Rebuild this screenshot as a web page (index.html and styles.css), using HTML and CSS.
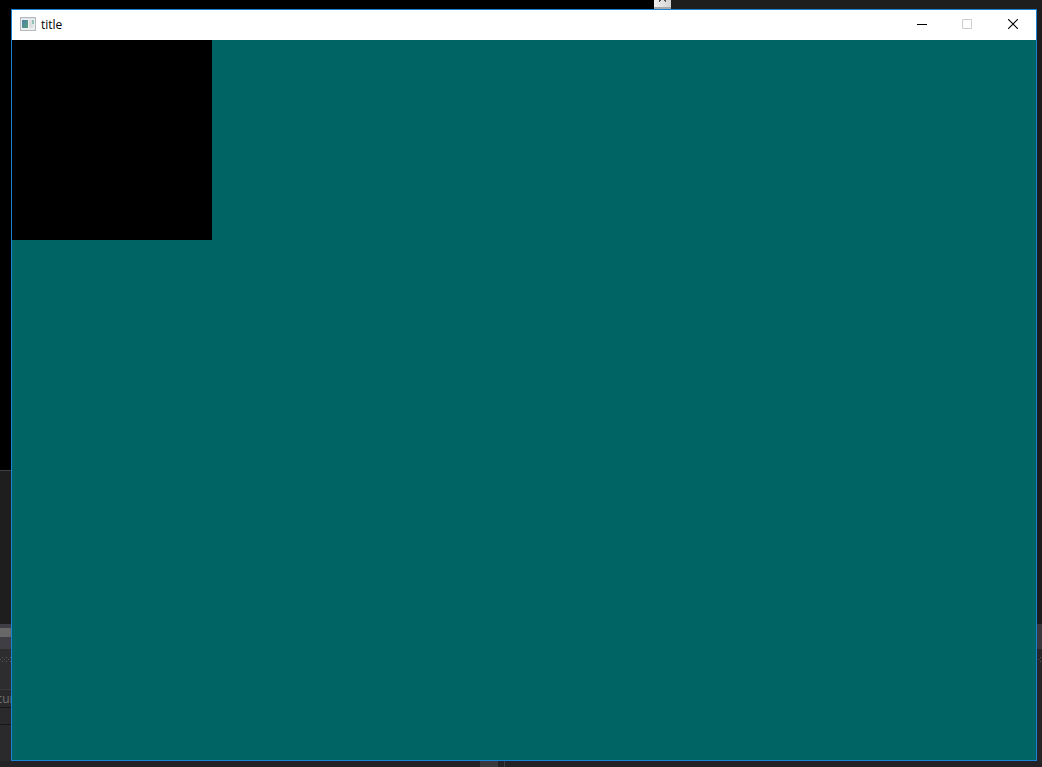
FILE: index.html
```
<!DOCTYPE html>
<html lang="en">
<head>
<meta charset="utf-8">
<title>title</title>
<link rel="stylesheet" href="styles.css">
</head>
<body>
<div class="desktop">
  <div class="strip-top">
    <div class="console-top"></div>
    <button class="scroll-up" aria-label="Scroll up">
      <svg width="17" height="9" viewBox="0 0 17 9" shape-rendering="crispEdges"><path d="M0 7h17v2H0z" fill="#a8a8a8"/><path d="M5 0h2v1H5zM10 0h2v1h-2zM5 1h1v1H5zM11 1h1v1h-1z" fill="#505050"/></svg>
    </button>
  </div>
  <div class="rail-left">
    <div class="console-left"></div>
    <div class="editor"></div>
    <div class="scrollbar"></div>
    <div class="panel-head">
      <svg width="11" height="5" viewBox="0 0 11 5" shape-rendering="crispEdges"><path d="M2 0h1v1H2zM6 0h1v1H6zM10 0h1v1h-1zM0 2h1v1H0zM4 2h1v1H4zM8 2h1v1H8zM2 4h1v1H2zM6 4h1v1H6zM10 4h1v1h-1z" fill="#58585c"/></svg>
    </div>
    <div class="panel-row"><span>cur</span></div>
    <div class="panel-gap"></div>
    <div class="panel-rest"></div>
  </div>
  <main class="window">
    <header class="titlebar">
      <svg class="app-icon" width="16" height="14" viewBox="0 0 16 14">
        <defs><linearGradient id="pane" x1="0" y1="0" x2="1" y2="1"><stop offset="0" stop-color="#4b7fa5"/><stop offset="1" stop-color="#58a07c"/></linearGradient></defs>
        <path d="M0 0h16v14H0z" fill="#b4b9be"/>
        <path d="M1 1h14v1H1z" fill="#dce2e8"/>
        <path d="M1 2h14v11H1z" fill="#eff0f1"/>
        <path d="M2 3h6v8H2z" fill="url(#pane)"/>
        <path d="M9 3h3v8H9z" fill="#dedede"/>
        <path d="M12 3h2v4h-2z" fill="#8fc3b4"/>
        <path d="M12 7h2v4h-2z" fill="#dfe5e3"/>
      </svg>
      <h1 class="caption">title</h1>
      <div class="controls">
        <button class="control" aria-label="Minimize"><svg width="12" height="10" viewBox="0 0 12 10"><path d="M2 5h10v1H2z"/></svg></button>
        <button class="control" aria-label="Maximize" disabled><svg width="10" height="10" viewBox="0 0 10 10"><path d="M.5.5h9v9h-9z" fill="none" stroke="#ccc"/></svg></button>
        <button class="control" aria-label="Close"><svg width="10" height="10" viewBox="0 0 10 10"><path d="M0 0l10 10M10 0L0 10" fill="none" stroke="#000" stroke-width="1.1"/></svg></button>
      </div>
    </header>
    <div class="client"><div class="square"></div></div>
  </main>
  <div class="rail-right">
    <div class="right-head"></div>
    <div class="right-panel">
      <svg width="5" height="5" viewBox="0 0 5 5" shape-rendering="crispEdges"><path d="M3 0h1v1H3zM1 2h1v1H1zM3 4h1v1H3z" fill="#505054"/></svg>
    </div>
  </div>
  <div class="strip-bottom">
    <div class="thumb"></div>
    <div class="divider"></div>
  </div>
</div>
</body>
</html>
```
FILE: styles.css
```
* { box-sizing: border-box; }

body {
  margin: 0;
  font-family: "Open Sans", "Noto Sans", sans-serif;
  font-size: 12px;
}

svg { display: block; }

button {
  margin: 0;
  padding: 0;
  border: 0;
  background: none;
}

.desktop {
  display: grid;
  grid-template: 9px minmax(0, 1fr) 6px / 11px minmax(0, 1fr) 5px;
  height: 100vh;
  overflow: hidden;
  background: #1e1e1e;
}

/* Applications behind the window */
.strip-top {
  grid-column: 1 / -1;
  display: flex;
}
.console-top {
  width: 654px;
  background: #000;
}
.scroll-up { background: linear-gradient(90deg, #f0f0f0, #d4d4d4); }

.rail-left {
  display: flex;
  flex-direction: column;
  background: #2a2a2c;
}
.console-left {
  flex: 1;
  background: #000;
}
.editor {
  height: 154px;
  border-top: 1px solid #3f3f46;
  background: #1e1e1e;
}
.scrollbar {
  height: 25px;
  border: solid #3e3e44;
  border-width: 4px 0 12px;
  background: #686868;
}
.panel-head {
  height: 41px;
  padding-top: 8px;
  border-bottom: 1px solid #38383a;
  background: #2d2d30;
}
.panel-row {
  display: flex;
  justify-content: center;
  height: 18px;
  border-bottom: 1px solid #161616;
  line-height: 18px;
  color: #707072;
}
.panel-gap {
  height: 17px;
  border-bottom: 1px solid #161616;
}
.panel-rest { height: 36px; }

.rail-right {
  display: flex;
  flex-direction: column;
  justify-content: flex-end;
  background: #1c1c1c;
}
.right-head {
  height: 25px;
  background: #38383d;
}
.right-panel {
  height: 112px;
  padding-top: 8px;
  background: #262628;
}

.strip-bottom {
  grid-column: 1 / -1;
  display: flex;
  gap: 6px;
  padding-left: 480px;
  background: #232325;
}
.thumb {
  width: 18px;
  background: #3a3a3d;
}
.divider {
  width: 1px;
  background: #3f3f46;
}

/* Application window */
.window {
  z-index: 1;
  display: flex;
  flex-direction: column;
  border: 1px solid #1883d7;
  background: #006464;
}
.titlebar {
  display: flex;
  align-items: center;
  height: 30px;
  padding-left: 8px;
  background: #fff;
}
.app-icon { margin-bottom: 2px; }
.caption {
  margin: 0 0 0 5px;
  font-size: 12px;
  font-weight: 400;
  line-height: 30px;
  color: #000;
}
.controls {
  display: flex;
  align-self: flex-start;
  margin-left: auto;
}
.control {
  display: flex;
  align-items: center;
  justify-content: center;
  width: 46px;
  height: 28px;
}
.client { flex: 1; }
.square {
  width: 200px;
  height: 200px;
  background: #000;
}
```
